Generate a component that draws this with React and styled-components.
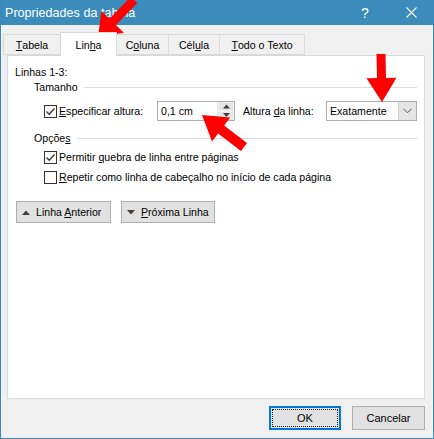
import React from "react";
import styled, { createGlobalStyle } from "styled-components";

const FONT = `"Liberation Sans", Arial, sans-serif`;

const Global = createGlobalStyle`
  html, body { margin: 0; padding: 0; background: #f0f0f0; }
  body { font-family: ${FONT}; }
  * { box-sizing: border-box; }
`;

const Window = styled.div`
  position: relative;
  width: 434px;
  height: 439px;
  border: 1px solid #3a8ab9;
  border-top: none;
  background: #f0f0f0;
  display: flex;
  flex-direction: column;
  font-family: ${FONT};
  font-size: 10.6px;
  color: #000;
  overflow: hidden;
  white-space: nowrap;
`;

const TitleBar = styled.div`
  height: 25px;
  flex: none;
  background: #3b8cbb;
  color: #fff;
  display: flex;
  align-items: center;
  padding-left: 5px;
  font-size: 12.6px;
  margin: 0 -1px;
`;

const TitleText = styled.div`
  flex: 1;
`;

const TitleButton = styled.div`
  width: 46px;
  height: 25px;
  display: flex;
  align-items: center;
  justify-content: center;
  font-size: 14px;
  color: #fff;
`;

const Body = styled.div`
  flex: 1;
  display: flex;
  flex-direction: column;
  padding: 6px 8px 0 6px;
`;

const TabStrip = styled.div`
  height: 24px;
  display: flex;
  align-items: flex-end;
  margin-left: -4px;
  position: relative;
  z-index: 1;
`;

const Tab = styled.div`
  width: ${(p) => p.$w}px;
  height: ${(p) => (p.$active ? 24 : 21)}px;
  margin-bottom: ${(p) => (p.$active ? -1 : 0)}px;
  margin-left: ${(p) => (p.$first ? 0 : -1)}px;
  border: 1px solid #d9d9d9;
  border-bottom: ${(p) => (p.$active ? "none" : "1px solid #d9d9d9")};
  background: ${(p) => (p.$active ? "#fff" : "#f0f0f0")};
  display: flex;
  align-items: center;
  justify-content: center;
  padding-top: ${(p) => (p.$active ? 0 : 1)}px;
  position: relative;
  z-index: ${(p) => (p.$active ? 2 : 1)};
`;

const Panel = styled.div`
  width: 418px;
  height: 344px;
  background: #fff;
  border: 1px solid #d9d9d9;
  display: flex;
  flex-direction: column;
  padding: 8px 7px 0 7px;
`;

const Heading = styled.div`
  height: 16px;
  line-height: 16px;
`;

const GroupHeader = styled.div`
  height: 14px;
  margin-left: 19px;
  margin-top: ${(p) => p.$mt || 0}px;
  display: flex;
  align-items: center;
  &::after {
    content: "";
    flex: 1;
    height: 1px;
    background: #dcdcdc;
    margin-left: 6px;
  }
`;

const Row = styled.div`
  display: flex;
  align-items: center;
  margin-left: 29px;
  margin-top: ${(p) => p.$mt || 0}px;
  height: ${(p) => p.$h || 16}px;
`;

const CheckWrap = styled.label`
  display: flex;
  align-items: center;
  width: ${(p) => (p.$w ? p.$w + "px" : "auto")};
  flex: none;
`;

const Box = styled.span`
  width: 13px;
  height: 13px;
  border: 1px solid #333;
  background: #fff;
  margin-right: 2px;
  display: flex;
  align-items: center;
  justify-content: center;
`;

const U = styled.span`
  text-decoration: underline;
  text-underline-offset: 1px;
`;

const SpinField = styled.div`
  display: flex;
  height: 20px;
  width: 78px;
  border: 1px solid #abadb3;
  background: #fff;
`;

const SpinText = styled.div`
  flex: 1;
  padding-left: 3px;
  display: flex;
  align-items: center;
`;

const SpinButtons = styled.div`
  width: 17px;
  display: flex;
  flex-direction: column;
  border-left: 1px solid #e3e3e3;
`;

const SpinBtn = styled.div`
  flex: 1;
  background: #e6e6e6;
  border: 1px solid #f0f0f0;
  display: flex;
  align-items: center;
  justify-content: center;
`;

const FieldLabel = styled.div`
  width: 83px;
  margin-left: 8px;
  flex: none;
`;

const Select = styled.div`
  width: 91px;
  height: 20px;
  border: 1px solid #adadad;
  background: #fff;
  display: flex;
`;

const SelectText = styled.div`
  flex: 1;
  padding-left: 3px;
  display: flex;
  align-items: center;
`;

const SelectArrow = styled.div`
  width: 18px;
  background: #e5e5e5;
  border-left: 1px solid #d0d0d0;
  display: flex;
  align-items: center;
  justify-content: center;
`;

const NavRow = styled.div`
  display: flex;
  gap: 10px;
  margin-top: 16px;
  margin-left: 1px;
`;

const NavButton = styled.div`
  width: ${(p) => p.$w}px;
  height: 22px;
  background: #e1e1e1;
  border: 1px solid #adadad;
  display: flex;
  align-items: center;
  padding-left: 5px;
  gap: 6px;
`;

const Footer = styled.div`
  display: flex;
  justify-content: flex-end;
  gap: 11px;
  margin-top: 7px;
`;

const DlgButton = styled.div`
  width: ${(p) => p.$w}px;
  height: 24px;
  background: #e1e1e1;
  border: ${(p) => (p.$default ? "2px solid #0078d7" : "1px solid #adadad")};
  display: flex;
  align-items: center;
  justify-content: center;
  position: relative;
  font-size: 11px;
  &::before {
    content: "";
    display: ${(p) => (p.$default ? "block" : "none")};
    position: absolute;
    inset: 1px;
    border: 1px dotted #222;
  }
`;

const Overlay = styled.svg`
  position: absolute;
  left: -1px;
  top: 0;
  pointer-events: none;
`;

function arrowPoints(tx, ty, hx, hy, hl, hw, sw) {
  const dx = hx - tx, dy = hy - ty;
  const L = Math.hypot(dx, dy);
  const ux = dx / L, uy = dy / L;
  const px = -uy, py = ux;
  const bx = hx - ux * hl, by = hy - uy * hl;
  const pts = [
    [tx + (px * sw) / 2, ty + (py * sw) / 2],
    [bx + (px * sw) / 2, by + (py * sw) / 2],
    [bx + (px * hw) / 2, by + (py * hw) / 2],
    [hx, hy],
    [bx - (px * hw) / 2, by - (py * hw) / 2],
    [bx - (px * sw) / 2, by - (py * sw) / 2],
    [tx - (px * sw) / 2, ty - (py * sw) / 2],
  ];
  return pts.map((p) => p.map((v) => v.toFixed(1)).join(",")).join(" ");
}

const Check = () => (
  <svg width="11" height="11" viewBox="0 0 11 11">
    <path d="M1.5 5.5 L4.2 8.2 L9.5 2.5" fill="none" stroke="#333" strokeWidth="1.3" />
  </svg>
);

const Tri = ({ up, size = 8, color = "#404040" }) => (
  <svg width={size} height={size / 2 + 1} viewBox="0 0 8 5">
    {up ? <path d="M0 5 L4 0.5 L8 5 Z" fill={color} /> : <path d="M0 0 L8 0 L4 4.5 Z" fill={color} />}
  </svg>
);

export default function App() {
  const tabs = [
    { w: 58, label: <><U>T</U>abela</> },
    { w: 57, label: <>Lin<U>h</U>a</>, active: true },
    { w: 53, label: <>C<U>o</U>luna</> },
    { w: 52, label: <>Cél<U>u</U>la</> },
    { w: 86, label: <><U>T</U>odo o Texto</> },
  ];
  return (
    <>
      <Global />
      <Window>
        <TitleBar>
          <TitleText>Propriedades da tabela</TitleText>
          <TitleButton>?</TitleButton>
          <TitleButton>
            <svg width="11" height="11" viewBox="0 0 11 11">
              <path d="M0.5 0.5 L10.5 10.5 M10.5 0.5 L0.5 10.5" stroke="#fff" strokeWidth="1.1" />
            </svg>
          </TitleButton>
        </TitleBar>
        <Body>
          <TabStrip>
            {tabs.map((t, i) => (
              <Tab key={i} $w={t.w} $active={t.active} $first={i === 0}>
                {t.label}
              </Tab>
            ))}
          </TabStrip>
          <Panel>
            <Heading>Linhas 1-3:</Heading>
            <GroupHeader>Tamanho</GroupHeader>
            <Row $mt={7} $h={20}>
              <CheckWrap $w={113}>
                <Box><Check /></Box>
                <span><U>E</U>specificar altura:</span>
              </CheckWrap>
              <SpinField>
                <SpinText>0,1 cm</SpinText>
                <SpinButtons>
                  <SpinBtn><Tri up size={7} /></SpinBtn>
                  <SpinBtn><Tri size={7} /></SpinBtn>
                </SpinButtons>
              </SpinField>
              <FieldLabel>Altura <U>d</U>a linha:</FieldLabel>
              <Select>
                <SelectText>Exatamente</SelectText>
                <SelectArrow>
                  <svg width="9" height="6" viewBox="0 0 9 6">
                    <path d="M0.5 0.8 L4.5 4.8 L8.5 0.8" fill="none" stroke="#555" strokeWidth="1" />
                  </svg>
                </SelectArrow>
              </Select>
            </Row>
            <GroupHeader $mt={10}>Opçõe<U>s</U></GroupHeader>
            <Row $mt={4}>
              <CheckWrap>
                <Box><Check /></Box>
                <span>Permitir <U>q</U>uebra de linha entre páginas</span>
              </CheckWrap>
            </Row>
            <Row $mt={4}>
              <CheckWrap>
                <Box />
                <span><U>R</U>epetir como linha de cabeçalho no início de cada página</span>
              </CheckWrap>
            </Row>
            <NavRow>
              <NavButton $w={95}>
                <Tri up size={8} />
                <span>Linha <U>A</U>nterior</span>
              </NavButton>
              <NavButton $w={94}>
                <Tri size={8} />
                <span><U>P</U>róxima Linha</span>
              </NavButton>
            </NavRow>
          </Panel>
          <Footer>
            <DlgButton $w={72} $default>OK</DlgButton>
            <DlgButton $w={73}>Cancelar</DlgButton>
          </Footer>
        </Body>
        <Overlay width="434" height="439" viewBox="0 0 434 439">
          <polygon points={arrowPoints(134, 0, 98, 37, 21, 31, 9)} fill="#ff0000" />
          <polygon points={arrowPoints(381, 54, 382, 102, 24, 30, 9)} fill="#ff0000" />
          <polygon points={arrowPoints(244, 147, 202, 115, 24, 30, 10)} fill="#ff0000" />
        </Overlay>
      </Window>
    </>
  );
}
